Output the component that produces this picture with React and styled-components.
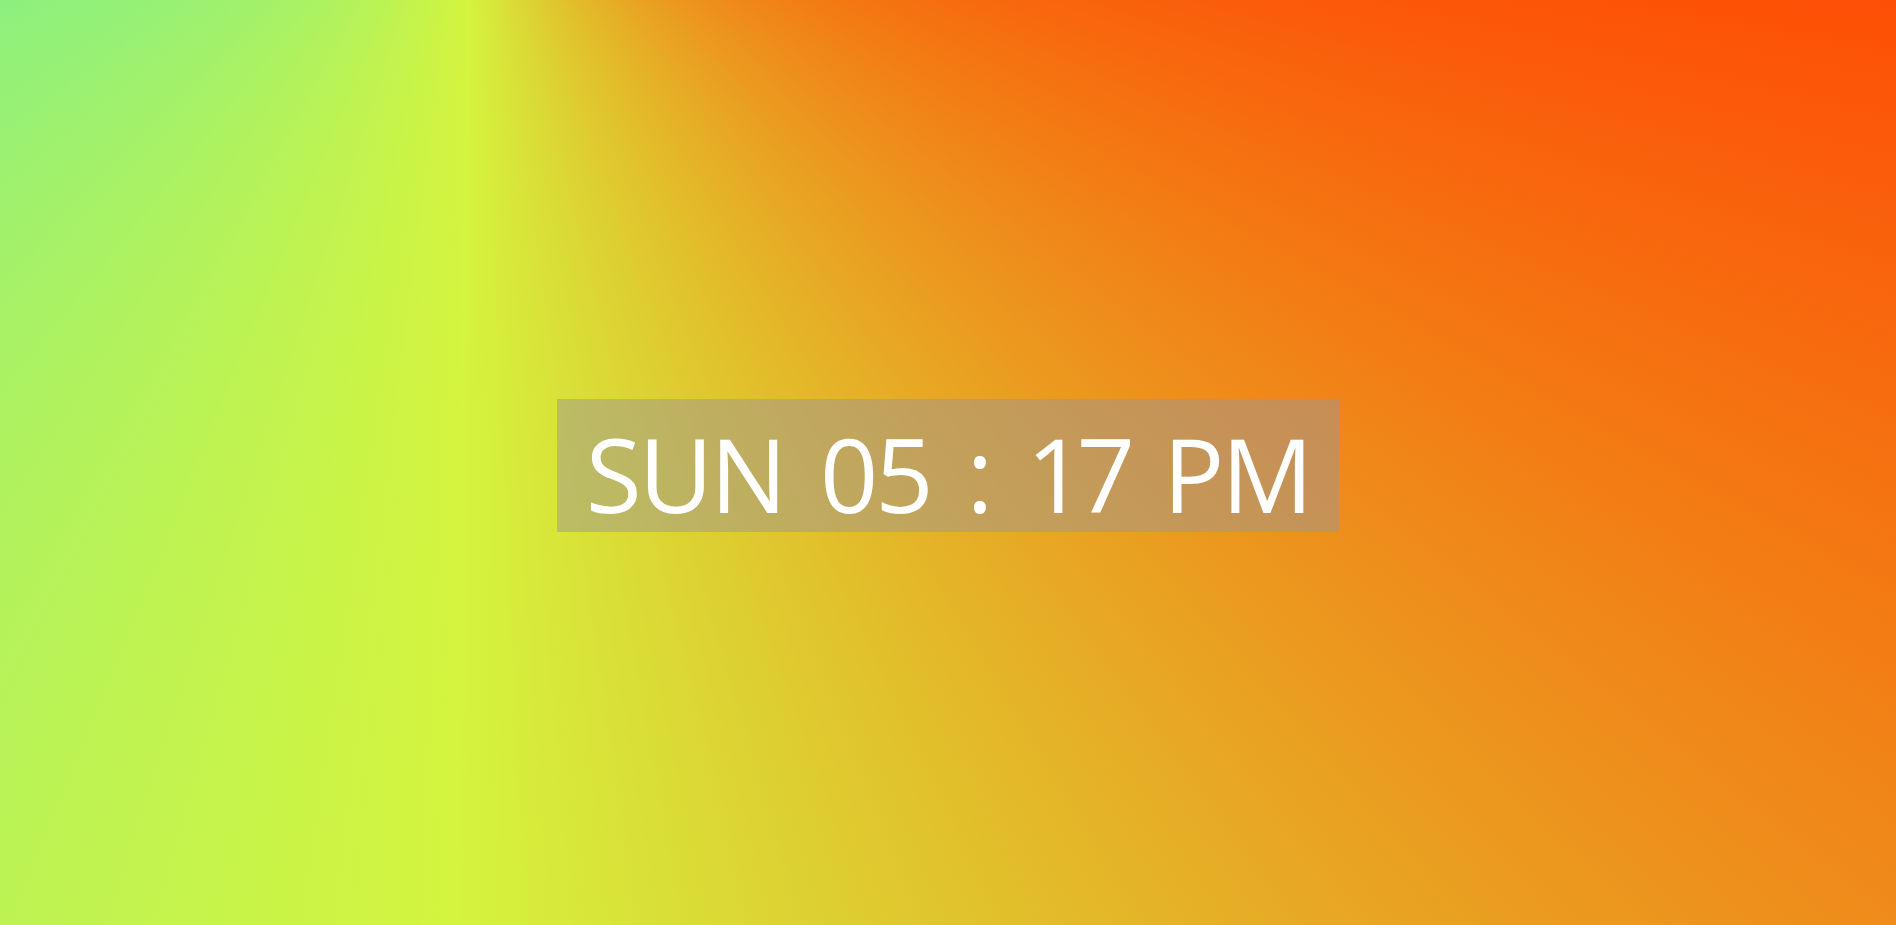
import React from "react";
import styled, { createGlobalStyle } from "styled-components";

const GlobalStyle = createGlobalStyle`
  html, body {
    margin: 0;
    padding: 0;
    height: 100%;
    overflow: hidden;
  }
  #root {
    height: 100%;
  }
`;

const Page = styled.main`
  height: 100vh;
  width: 100vw;
  box-sizing: border-box;
  padding-top: 6px;
  display: flex;
  align-items: center;
  justify-content: center;
  background: conic-gradient(
    at 472px -200px,
    #fe4f05 98deg,
    #d4f43e 180.9deg,
    #8cf07e 247deg
  );
`;

const ClockBox = styled.div`
  width: 782px;
  height: 133px;
  box-sizing: border-box;
  display: flex;
  align-items: center;
  justify-content: center;
  gap: 36px;
  background: rgba(158, 150, 145, 0.5);
  color: #ffffff;
  font-family: "Open Sans", "Noto Sans", sans-serif;
  font-weight: 400;
  font-size: 102px;
  line-height: 1;
  letter-spacing: -3px;
  padding-top: 16px;
`;

const Segment = styled.span`
  display: block;
  white-space: nowrap;
  letter-spacing: ${(p) => (p.$tight ? "-8px" : "-3px")};
`;

export default function App() {
  const parts = [
    { text: "SUN" },
    { text: "05" },
    { text: ":" },
    { text: "17", tight: true },
    { text: "PM" },
  ];
  return (
    <>
      <GlobalStyle />
      <Page>
        <ClockBox>
          {parts.map((p, i) => (
            <Segment key={i} $tight={p.tight}>
              {p.text}
            </Segment>
          ))}
        </ClockBox>
      </Page>
    </>
  );
}
